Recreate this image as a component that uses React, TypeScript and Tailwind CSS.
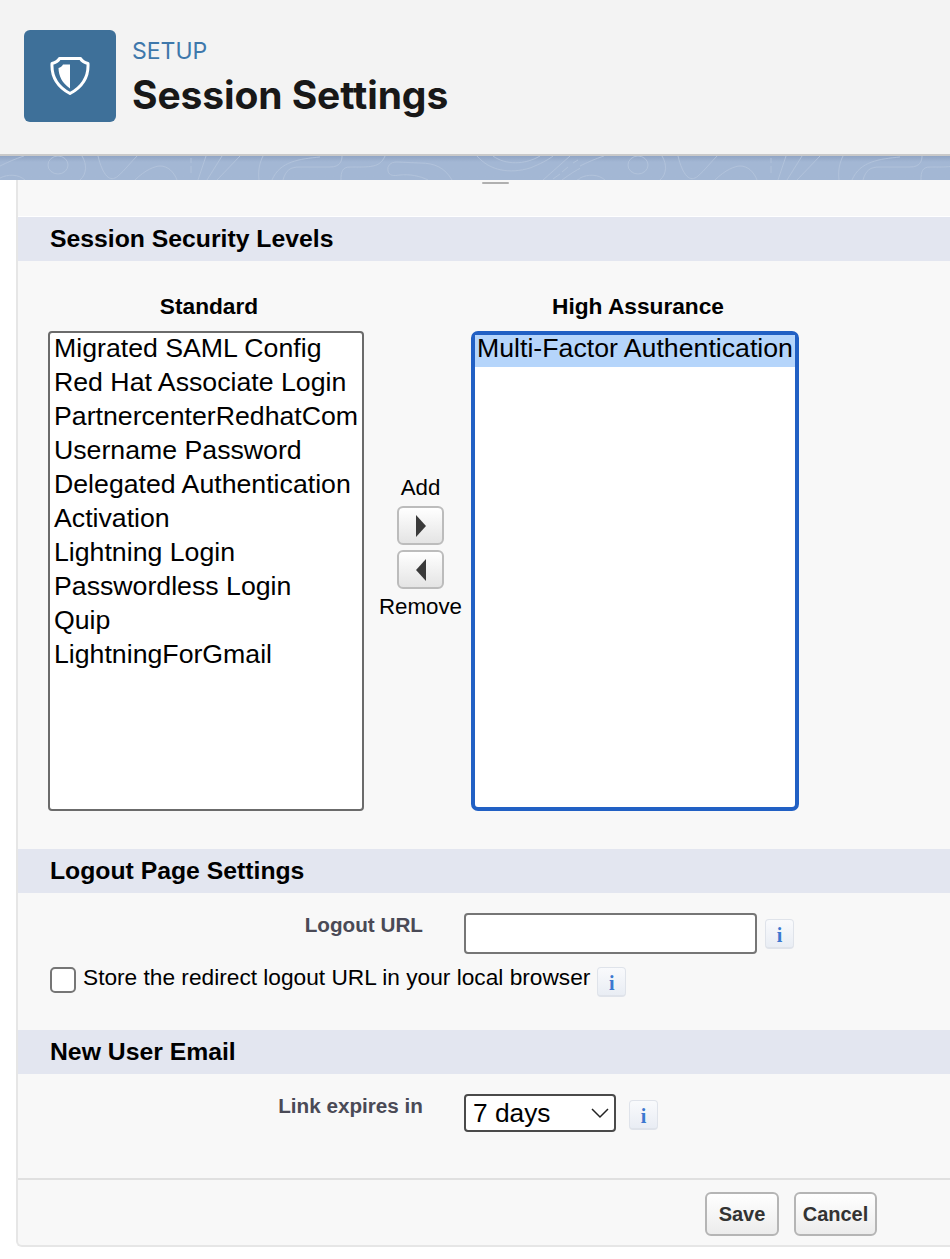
const standardOptions = [
  'Migrated SAML Config',
  'Red Hat Associate Login',
  'PartnercenterRedhatCom',
  'Username Password',
  'Delegated Authentication',
  'Activation',
  'Lightning Login',
  'Passwordless Login',
  'Quip',
  'LightningForGmail',
];

function ShieldIcon() {
  return (
    <svg width="40" height="40" viewBox="0 0 40 40" fill="none">
      <path
        d="M9.500 2.500h21c1 2 3.500 4 7.500 5 .6 12-5 23-18 30C7 30.500 1.400 19.500 2 7.500c4-1 6.500-3 7.500-5z"
        stroke="white"
        strokeWidth="3"
        strokeLinejoin="round"
      />
      <path d="M20 8.500h-7c-1 1.800-2.500 3-4.500 3.500 .2 8 3.500 15 11.500 20.500z" fill="white" />
    </svg>
  );
}

function BandPattern() {
  return (
    <svg width="100%" height="24" className="block">
      <defs>
        <pattern id="topo" width="580" height="24" patternUnits="userSpaceOnUse">
          <g fill="none" stroke="#b4c4dc" strokeWidth="1" strokeOpacity="0.85">
            <path d="M0 10C8 6 15 3 24 0M0 22c8-4 18-4 25 2" />
            <ellipse cx="58" cy="9" rx="10" ry="9" />
            <path d="M82 0c5 8 5 18-2 24" />
            <path d="M98 0c5 20 12 27 20 20 7-6 13-14 19-20" />
            <path d="M135 24c10-10 20-14 25-14 8 0 14 6 17 14" />
            <path d="M191 2v5M191 10v7" />
            <path d="M206 0l-8 24M222 0l-15 24M240 0l-23 24" />
            <path d="M263 0c-4 8-5 16-4 24" />
            <path d="M320 1c-20 2-40 4-48 23" />
            <path d="M342 0c0 5-2 11-12 11h-30c-10 0-14 3-17 13" />
            <path d="M385 0c-5 12-15 11-35 11-8 0-9 5-9 13" />
            <path d="M452 24c-7-12-17-17-32-17l-23-1c-7 0-10 4-9 9 1 5 6 5 12 4 10-1 20 1 28 5" />
            <path d="M477 0c13 15 33 18 53 12 10-4 18-8 23-12" />
            <path d="M493 0c12 9 32 9 47 0" />
            <path d="M570 0l-27 24M568 11l-6 5M578 4l-5 3M560 18l-7 5" />
            <path d="M610 0c-20 6-35 14-48 24M577 24c8-4 18-4 25 0" />
          </g>
        </pattern>
      </defs>
      <rect width="100%" height="24" fill="url(#topo)" />
    </svg>
  );
}

function SectionHeader({ title }: { title: string }) {
  return (
    <div className="h-[44px] bg-[#e3e6f0] pl-[32px] text-[24.750px] leading-[44px] font-bold text-black">
      {title}
    </div>
  );
}

function InfoButton() {
  return (
    <div className="flex h-[30px] w-[29px] shrink-0 items-center justify-center rounded-[4px] border border-[#dfe3ea] border-b-2 bg-gradient-to-b from-[#f9fafc] to-[#e9edf4] pt-[2px] font-['Liberation_Serif',serif] text-[20px] font-bold text-[#3b78d0]">
      i
    </div>
  );
}

function ArrowButton({ dir }: { dir: 'left' | 'right' }) {
  return (
    <div className="flex h-[39px] w-[47px] items-center justify-center rounded-[6px] border-2 border-[#bcbcbc] bg-gradient-to-b from-white to-[#e4e4e4]">
      <svg width="10" height="22" viewBox="0 0 10 22">
        <path d={dir === 'right' ? 'M0 0l10 11L0 22z' : 'M10 0L0 11l10 11z'} fill="#3a3a3a" />
      </svg>
    </div>
  );
}

function FooterButton({ label, width }: { label: string; width: string }) {
  return (
    <button className={`h-[44px] ${width} rounded-[6px] border-2 border-[#b5b5b5] bg-gradient-to-b from-white to-[#ececec] text-[20px] font-bold text-[#333]`}>
      {label}
    </button>
  );
}

export default function App() {
  return (
    <div className="h-[1259px] w-[950px] overflow-hidden bg-white font-['Liberation_Sans',sans-serif] text-black">
      <header className="flex h-[156px] items-start border-b-2 border-[#c9c9c9] bg-[#f3f3f3] pt-[30px] pl-[24px]">
        <div className="flex h-[92px] w-[92px] items-center justify-center rounded-[6px] bg-[#3e7099]">
          <ShieldIcon />
        </div>
        <div className="ml-[16px] font-['Inter',sans-serif]">
          <div className="mt-[6px] text-[23px] leading-[30px] text-[#3e78ab]">SETUP</div>
          <h1 className="mt-[6px] text-[39px] leading-[46px] font-bold tracking-[-0.1px] text-[#181818]">Session Settings</h1>
        </div>
      </header>

      <div className="h-[24px] bg-gradient-to-b from-[#90a4c4] to-[#a3b7d4] to-[25%]">
        <BandPattern />
      </div>

      <main className="ml-[16px] h-[1067px] rounded-bl-[6px] border-b-2 border-l-2 border-[#e6e6e6] bg-[#f8f8f8]">
        <div className="flex h-[36px] justify-center">
          <div className="mt-[2px] mr-[-22px] h-[2px] w-[27px] rounded-full bg-[#b0b0b0]" />
        </div>
        <div className="border-t border-white">
          <SectionHeader title="Session Security Levels" />
        </div>

        <section className="flex h-[588px] items-start pt-[31px] pl-[30px]">
          <div className="w-[316px]">
            <div className="mb-[11px] pl-[6px] text-center text-[22.700px] leading-[28px] font-bold">Standard</div>
            <div className="h-[480px] rounded-[4px] border-2 border-[#6b6b6b] bg-white px-[4px] text-[26.700px] leading-[30px]">
              {standardOptions.map((option) => (
                <div key={option} className="h-[34px] whitespace-nowrap">{option}</div>
              ))}
            </div>
          </div>
          <div className="flex w-[107px] flex-col items-center pt-[182px] pl-[6px] text-[22.300px] leading-[28px]">
            <div className="mb-[4px] h-[28px]">Add</div>
            <ArrowButton dir="right" />
            <div className="h-[5px]" />
            <ArrowButton dir="left" />
            <div className="mt-[4px]">Remove</div>
          </div>
          <div className="w-[328px]">
            <div className="mb-[11px] pl-[6px] text-center text-[22.700px] leading-[28px] font-bold">High Assurance</div>
            <div className="h-[480px] rounded-[7px] border-4 border-[#2160c4] bg-white text-[26.700px] leading-[26px]">
              <div className="h-[32px] whitespace-nowrap bg-[#b5d5fb] pl-[2px]">Multi-Factor Authentication</div>
            </div>
          </div>
        </section>

        <SectionHeader title="Logout Page Settings" />
        <section className="h-[137px] pt-[20px]">
          <div className="flex items-start">
            <label className="w-[405px] text-right text-[20.700px] leading-[24px] font-bold text-[#4a4a56]">Logout URL</label>
            <input className="ml-[41px] h-[41px] w-[293px] rounded-[4px] border-2 border-[#767676] bg-white" />
            <div className="mt-[6px] ml-[8px]"><InfoButton /></div>
          </div>
          <div className="mt-[12px] flex items-start pl-[32px]">
            <input type="checkbox" className="mt-[1px] h-[26px] w-[26px] appearance-none rounded-[5px] border-2 border-[#767676] bg-white" />
            <span className="ml-[7px] text-[22.700px] leading-[22px]">Store the redirect logout URL in your local browser</span>
            <div className="mt-[1px] ml-[7px]"><InfoButton /></div>
          </div>
        </section>

        <SectionHeader title="New User Email" />
        <section className="h-[104px] pt-[20px]">
          <div className="flex items-start">
            <label className="w-[405px] text-right text-[20.700px] leading-[24px] font-bold text-[#4a4a56]">Link expires in</label>
            <div className="relative ml-[41px] h-[38px] w-[152px] rounded-[4px] border-2 border-[#4a4a4a] bg-white">
              <select className="-mt-[2px] block h-[33px] w-full appearance-none bg-transparent pl-[7px] text-[26.300px]">
                <option>7 days</option>
              </select>
              <svg className="absolute top-[12px] right-[5px]" width="18" height="11" viewBox="0 0 18 11" fill="none">
                <path d="M1 1l8 8 8-8" stroke="#222" strokeWidth="1.500" />
              </svg>
            </div>
            <div className="mt-[6px] ml-[13px]"><InfoButton /></div>
          </div>
        </section>

        <footer className="flex h-[66px] justify-end gap-[15px] border-t-2 border-[#e0e0e0] pt-[12px] pr-[73px]">
          <FooterButton label="Save" width="w-[74px]" />
          <FooterButton label="Cancel" width="w-[83px]" />
        </footer>
      </main>
    </div>
  );
}
